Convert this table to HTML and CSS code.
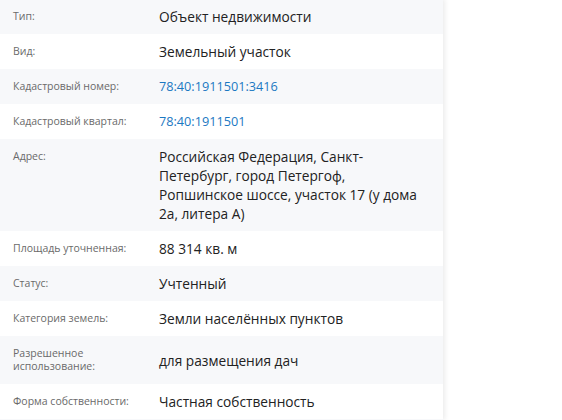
FILE: index.html
```html
<!DOCTYPE html>
<html lang="ru">
<head>
<meta charset="utf-8">
<link rel="stylesheet" href="styles.css">
</head>
<body>
<div class="panel">
  <div class="row"><div class="label">Тип:</div><div class="value">Объект недвижимости</div></div>
  <div class="row"><div class="label">Вид:</div><div class="value">Земельный участок</div></div>
  <div class="row"><div class="label">Кадастровый номер:</div><div class="value"><a class="link" href="#">78:40:1911501:3416</a></div></div>
  <div class="row"><div class="label">Кадастровый квартал:</div><div class="value"><a class="link" href="#">78:40:1911501</a></div></div>
  <div class="row"><div class="label">Адрес:</div><div class="value">Российская Федерация, Санкт-Петербург, город Петергоф, Ропшинское шоссе, участок 17 (у дома 2а, литера А)</div></div>
  <div class="row"><div class="label">Площадь уточненная:</div><div class="value">88 314 кв. м</div></div>
  <div class="row"><div class="label">Статус:</div><div class="value">Учтенный</div></div>
  <div class="row"><div class="label">Категория земель:</div><div class="value">Земли населённых пунктов</div></div>
  <div class="row"><div class="label">Разрешенное использование:</div><div class="value">для размещения дач</div></div>
  <div class="row"><div class="label">Форма собственности:</div><div class="value">Частная собственность</div></div>
</div>
</body>
</html>
```
FILE: styles.css
```css
html, body {
  margin: 0;
  padding: 0;
  background: #ffffff;
  height: 420px;
  overflow: hidden;
}
body {
  font-family: "Open Sans", "Noto Sans", sans-serif;
}
.panel {
  width: 443px;
  height: 421px;
  margin-top: -1px;
  overflow: hidden;
  background: #f7f8fa;
  box-shadow: 2px 0 5px rgba(0, 0, 0, 0.08);
}
.row {
  display: grid;
  grid-template-columns: 159px 1fr;
  padding: 8px 0;
  background: #ffffff;
}
.row:nth-child(odd) {
  background: #f7f8fa;
}
.label {
  align-self: start;
  padding: 3px 10px 3px 13px;
  font-size: 10.5px;
  line-height: 13px;
  color: #6a6a6a;
}
.value {
  align-self: center;
  padding-right: 16px;
  font-size: 13.7px;
  line-height: 19px;
  color: #222222;
}
.link {
  display: block;
  font-size: 12.7px;
  line-height: 19px;
  color: #1b78c2;
  text-decoration: none;
}
```
